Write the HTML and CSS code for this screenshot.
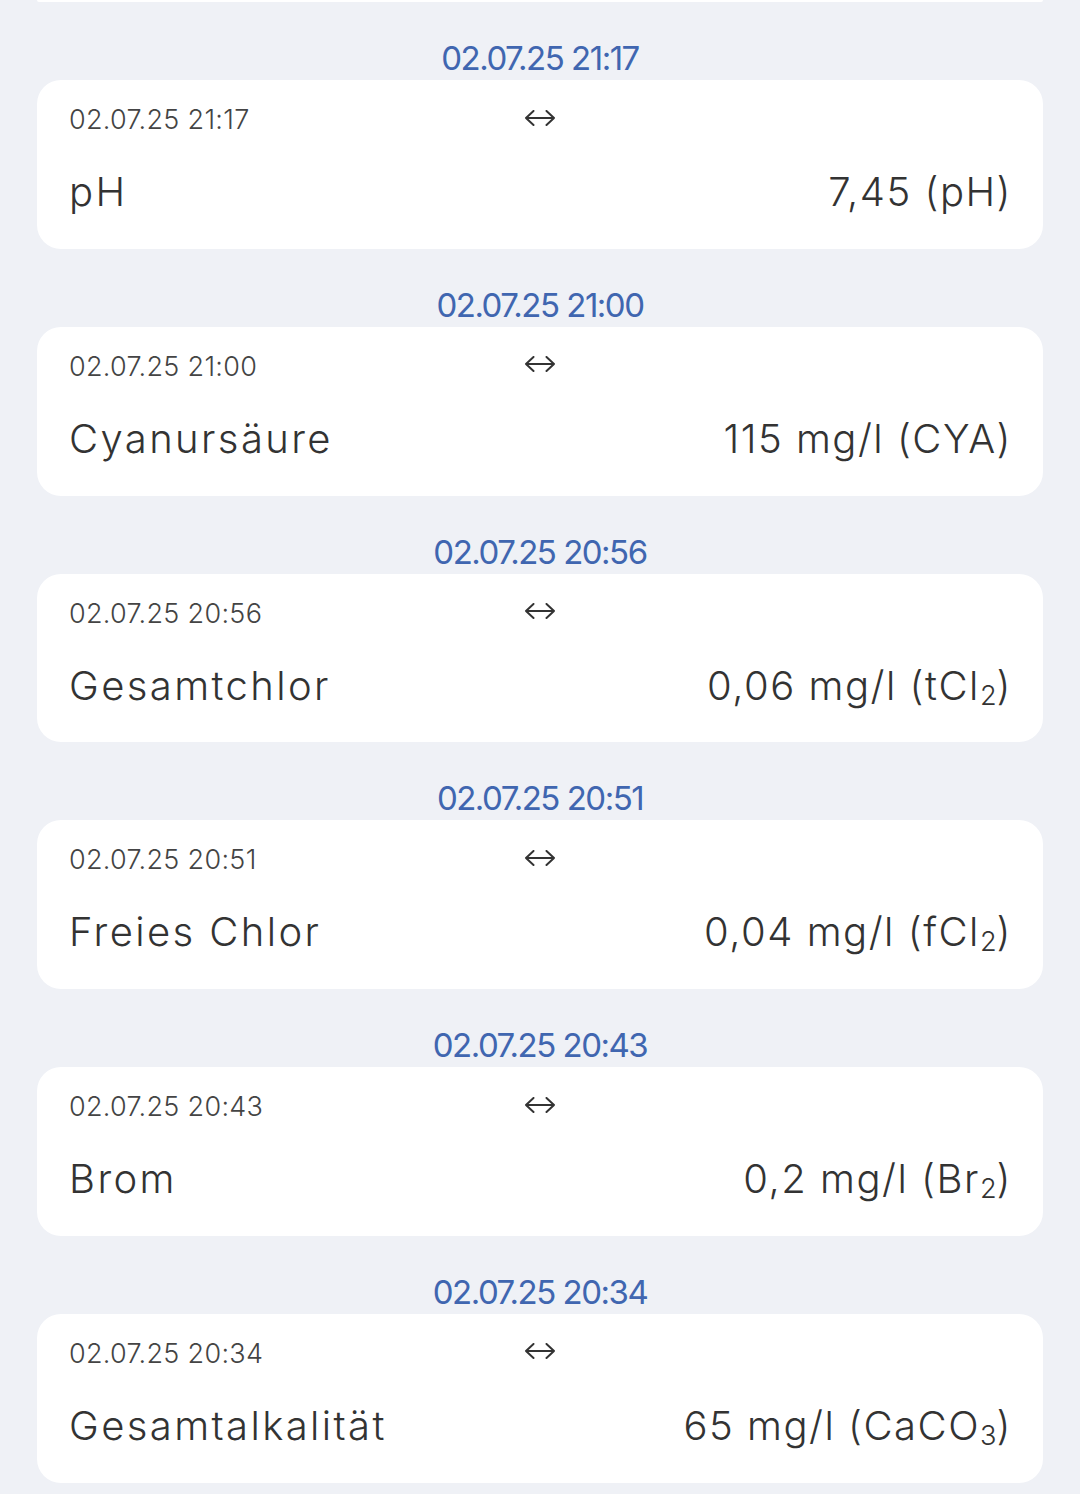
FILE: index.html
```html
<!DOCTYPE html>
<html lang="de">
<head>
<meta charset="utf-8">
<title>Messungen</title>
<link rel="stylesheet" href="styles.css">
</head>
<body>
<div class="list">
  <div class="stub"></div>

  <div class="group">
    <div class="group-date">02.07.25 21:17</div>
    <div class="card">
      <div class="meta"><span class="time">02.07.25 21:17</span><svg class="arrow" viewBox="0 0 32 16" width="32" height="16"><path d="M2 8H30M9.5 1L2 8L9.5 15M22.5 1L30 8L22.5 15"/></svg><span></span></div>
      <div class="main"><span class="name">pH</span><span class="value">7,45 (pH)</span></div>
    </div>
  </div>

  <div class="group">
    <div class="group-date">02.07.25 21:00</div>
    <div class="card">
      <div class="meta"><span class="time">02.07.25 21:00</span><svg class="arrow" viewBox="0 0 32 16" width="32" height="16"><path d="M2 8H30M9.5 1L2 8L9.5 15M22.5 1L30 8L22.5 15"/></svg><span></span></div>
      <div class="main"><span class="name">Cyanursäure</span><span class="value">115 mg/l (CYA)</span></div>
    </div>
  </div>

  <div class="group">
    <div class="group-date">02.07.25 20:56</div>
    <div class="card">
      <div class="meta"><span class="time">02.07.25 20:56</span><svg class="arrow" viewBox="0 0 32 16" width="32" height="16"><path d="M2 8H30M9.5 1L2 8L9.5 15M22.5 1L30 8L22.5 15"/></svg><span></span></div>
      <div class="main"><span class="name">Gesamtchlor</span><span class="value">0,06 mg/l (tCl<sub>2</sub>)</span></div>
    </div>
  </div>

  <div class="group">
    <div class="group-date">02.07.25 20:51</div>
    <div class="card">
      <div class="meta"><span class="time">02.07.25 20:51</span><svg class="arrow" viewBox="0 0 32 16" width="32" height="16"><path d="M2 8H30M9.5 1L2 8L9.5 15M22.5 1L30 8L22.5 15"/></svg><span></span></div>
      <div class="main"><span class="name">Freies Chlor</span><span class="value">0,04 mg/l (fCl<sub>2</sub>)</span></div>
    </div>
  </div>

  <div class="group">
    <div class="group-date">02.07.25 20:43</div>
    <div class="card">
      <div class="meta"><span class="time">02.07.25 20:43</span><svg class="arrow" viewBox="0 0 32 16" width="32" height="16"><path d="M2 8H30M9.5 1L2 8L9.5 15M22.5 1L30 8L22.5 15"/></svg><span></span></div>
      <div class="main"><span class="name">Brom</span><span class="value">0,2 mg/l (Br<sub>2</sub>)</span></div>
    </div>
  </div>

  <div class="group">
    <div class="group-date">02.07.25 20:34</div>
    <div class="card">
      <div class="meta"><span class="time">02.07.25 20:34</span><svg class="arrow" viewBox="0 0 32 16" width="32" height="16"><path d="M2 8H30M9.5 1L2 8L9.5 15M22.5 1L30 8L22.5 15"/></svg><span></span></div>
      <div class="main"><span class="name">Gesamtalkalität</span><span class="value">65 mg/l (CaCO<sub>3</sub>)</span></div>
    </div>
  </div>
</div>
</body>
</html>
```
FILE: styles.css
```css
html, body {
  margin: 0;
  padding: 0;
  background: #eff1f6;
}
body {
  font-family: Inter, "Noto Sans", sans-serif;
  font-weight: 300;
  color: #333;
}
.list {
  padding: 0 37px;
  display: flex;
  flex-direction: column;
}
.stub {
  height: 2px;
  background: #fff;
  border-radius: 0 0 3px 3px;
}
.group-date {
  text-align: center;
  color: #4066b0;
  font-weight: 400;
  font-size: 33px;
  line-height: 40px;
  letter-spacing: -1.5px;
  padding-top: 36px;
  padding-bottom: 2px;
}
.card {
  background: #fff;
  border-radius: 24px;
  padding: 22px 33px 30.8px 32px;
  display: flex;
  flex-direction: column;
  gap: 28px;
}
.meta {
  display: grid;
  grid-template-columns: 1fr auto 1fr;
  align-items: center;
  height: 36px;
}
.time {
  font-size: 27px;
  line-height: 36px;
  color: #444;
  letter-spacing: 0.3px;
}
.arrow {
  display: block;
  margin-top: -5px;
  fill: none;
  stroke: #333;
  stroke-width: 2;
  stroke-linecap: round;
  stroke-linejoin: round;
}
.main {
  display: flex;
  justify-content: space-between;
  align-items: center;
  height: 52px;
  font-size: 40px;
  line-height: 52px;
  color: #333;
}
.name { letter-spacing: 2.4px; }
.value { letter-spacing: 1.5px; margin-right: -2px; }
sub {
  font-size: 0.68em;
  vertical-align: -0.18em;
  line-height: 0;
  letter-spacing: 0;
}
```
